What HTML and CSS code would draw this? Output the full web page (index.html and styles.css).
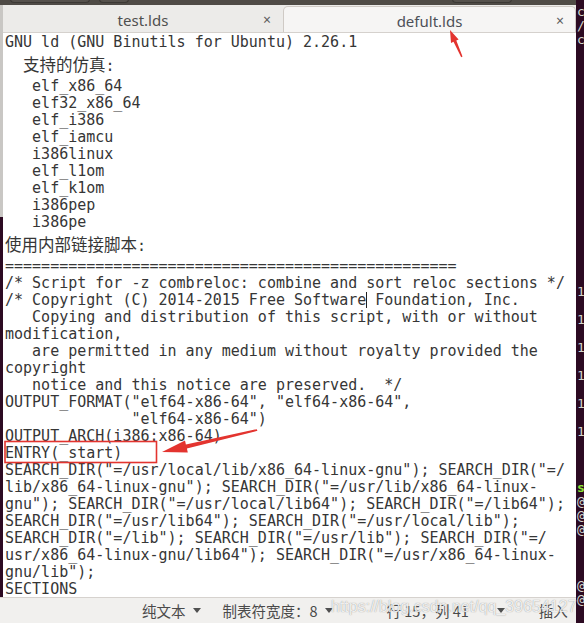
FILE: index.html
```html
<!DOCTYPE html>
<html>
<head>
<meta charset="utf-8">
<link rel="stylesheet" href="styles.css">
</head>
<body>
<div class="screen">
  <div class="main">
    <div class="topbar">
      <span class="tb-btn tb-a"></span>
      <span class="tb-btn tb-b"></span>
      <span class="tb-btn tb-c"></span>
    </div>
    <div class="mid">
      <div class="edge"><div class="edge-grey"></div><div class="edge-purple"></div></div>
      <div class="editor">
        <div class="tabs">
          <div class="tab"><span class="tab-label">test.lds</span><span class="tab-close">×</span></div>
          <div class="tab active"><span class="tab-label">defult.lds</span><span class="tab-close">×</span></div>
        </div>
        <div class="doc">
<div class="ln">GNU ld (GNU Binutils for Ubuntu) 2.26.1</div>
<div class="ln cjk">  <span class="zh">支持的仿真</span>:</div>
<div class="ln">   elf_x86_64</div>
<div class="ln">   elf32_x86_64</div>
<div class="ln">   elf_i386</div>
<div class="ln">   elf_iamcu</div>
<div class="ln">   i386linux</div>
<div class="ln">   elf_l1om</div>
<div class="ln">   elf_k1om</div>
<div class="ln">   i386pep</div>
<div class="ln">   i386pe</div>
<div class="ln cjk"><span class="zh">使用内部链接脚本</span>:</div>
<div class="ln">==================================================</div>
<div class="ln">/* Script for -z combreloc: combine and sort reloc sections */</div>
<div class="ln">/* Copyright (C) 2014-2015 Free Software<span class="caret"></span> Foundation, Inc.</div>
<div class="ln">   Copying and distribution of this script, with or without</div>
<div class="ln">modification,</div>
<div class="ln">   are permitted in any medium without royalty provided the</div>
<div class="ln">copyright</div>
<div class="ln">   notice and this notice are preserved.  */</div>
<div class="ln">OUTPUT_FORMAT("elf64-x86-64", "elf64-x86-64",</div>
<div class="ln">              "elf64-x86-64")</div>
<div class="ln">OUTPUT_ARCH(i386:x86-64)</div>
<div class="ln">ENTRY(_start)</div>
<div class="ln">SEARCH_DIR("=/usr/local/lib/x86_64-linux-gnu"); SEARCH_DIR("=/</div>
<div class="ln">lib/x86_64-linux-gnu"); SEARCH_DIR("=/usr/lib/x86_64-linux-</div>
<div class="ln">gnu"); SEARCH_DIR("=/usr/local/lib64"); SEARCH_DIR("=/lib64");</div>
<div class="ln">SEARCH_DIR("=/usr/lib64"); SEARCH_DIR("=/usr/local/lib");</div>
<div class="ln">SEARCH_DIR("=/lib"); SEARCH_DIR("=/usr/lib"); SEARCH_DIR("=/</div>
<div class="ln">usr/x86_64-linux-gnu/lib64"); SEARCH_DIR("=/usr/x86_64-linux-</div>
<div class="ln">gnu/lib");</div>
<div class="ln">SECTIONS</div>
        </div>
      </div>
    </div>
    <div class="status">
      <span class="st st-lang">纯文本<i class="tri"></i></span>
      <span class="st st-tab">制表符宽度：8<i class="tri"></i></span>
      <span class="st st-pos">行 15，列 41</span>
      <span class="st st-dd"><i class="tri"></i></span>
      <span class="st st-ins">插入</span>
    </div>
  </div>
  <div class="term">
<pre class="term-text">c
/
c

















1

1

1

1

1

1



<b>s</b>
@
@
@



@
@</pre>
  </div>
</div>
<div class="watermark">https://blog.csdn.net/qq_39654127</div>
<svg class="annot" width="584" height="623" viewBox="0 0 584 623">
  <rect x="5" y="441.5" width="151.5" height="21" fill="none" stroke="#e3342f" stroke-width="1.6"/>
  <polygon fill="#e3342f" points="162,452 187.8,452.6 186.9,448.6 257.4,430.8 256.8,429.2 185.9,444.4 185,440.4"/>
  <polygon fill="#e3342f" points="450,30 458.6,39.6 456.3,40.6 462.5,56.6 461.2,57.2 453.5,41.8 451,43"/>
</svg>
</body>
</html>
```

FILE: styles.css
```css
html, body {
  margin: 0;
  padding: 0;
}
body {
  width: 584px;
  height: 623px;
  overflow: hidden;
  position: relative;
  background: #2c0a22;
}
.screen {
  display: flex;
  height: 623px;
}
.main {
  width: 576px;
  display: flex;
  flex-direction: column;
}
.topbar {
  height: 5px;
  background: #4f4b46;
  display: flex;
  position: relative;
  overflow: hidden;
}
.tb-btn {
  display: block;
  height: 3px;
  margin-top: -1px;
  border: 1px solid #3c3935;
  border-top: none;
  border-radius: 0 0 5px 5px;
  background: #55514c;
}
.tb-a { width: 78px; margin-left: 10px; }
.tb-b { width: 28px; margin-left: 9px; }
.tb-c { width: 58px; margin-left: 323px; }
.mid {
  flex: 1;
  display: flex;
  min-height: 0;
}
.edge {
  width: 3px;
  display: flex;
  flex-direction: column;
}
.edge-grey {
  height: 212px;
  background: #c9c7c4;
}
.edge-purple {
  flex: 1;
  background: #2c0a22;
}
.editor {
  flex: 1;
  display: flex;
  flex-direction: column;
  background: #ffffff;
  min-width: 0;
}
.tabs {
  height: 28px;
  box-sizing: border-box;
  display: flex;
  background: #ecebe9;
  border-bottom: 1px solid #d5d1cd;
}
.tab {
  width: 280px;
  display: grid;
  grid-template-columns: 1fr auto 1fr;
  align-items: center;
  font-family: "Noto Sans", "DejaVu Sans", sans-serif;
  font-size: 15px;
  color: #4f4f4f;
  box-sizing: border-box;
}
.tab.active {
  flex: 1;
  margin-top: 1px;
  background: #f6f5f4;
  border: 1px solid #cfcac5;
  border-bottom: none;
  border-radius: 5px 5px 0 0;
  color: #4d5058;
}
.tab-label {
  grid-column: 2;
  line-height: 18px;
  padding-top: 3px;
}
.tab-close {
  grid-column: 3;
  justify-self: end;
  margin-right: 12px;
  padding-top: 2px;
  font-size: 14px;
  color: #5c5c5c;
}
.tab.active .tab-label {
  padding-top: 2px;
}
.tab.active .tab-close {
  margin-right: 11px;
  padding-top: 1px;
}
.doc {
  flex: 1;
  padding-left: 2px;
  padding-top: 1px;
  font-family: "DejaVu Sans Mono", "Liberation Mono", monospace;
  font-size: 15px;
  line-height: 17px;
  color: #363636;
  overflow: hidden;
}
.ln {
  white-space: pre;
  height: 17px;
}
.ln.cjk {
  height: 27px;
  line-height: 27px;
}
.zh {
  font-family: "Noto Sans CJK SC", sans-serif;
  font-size: 16.5px;
}
.caret {
  display: inline-block;
  width: 0;
  height: 16px;
  border-left: 1px solid #222;
  margin-right: -1px;
  vertical-align: -3px;
}
.status {
  height: 26px;
  box-sizing: border-box;
  border-top: 1px solid #d6d2ce;
  background: #f1f0ee;
  display: flex;
  align-items: center;
  font-family: "Noto Sans CJK SC", "Noto Sans", sans-serif;
  font-size: 14.5px;
  color: #4a4a4a;
}
.st {
  display: flex;
  align-items: center;
  white-space: pre;
}
.st-lang { margin-left: 142px; }
.st-tab { margin-left: 22px; }
.st-pos { margin-left: 54px; }
.st-dd { margin-left: 28px; }
.st-ins { margin-left: 34px; }
.tri {
  display: inline-block;
  width: 0;
  height: 0;
  border-left: 4.5px solid transparent;
  border-right: 4.5px solid transparent;
  border-top: 5px solid #505050;
  margin-left: 7px;
}
.st-dd .tri { margin-left: 0; }
.term {
  width: 8px;
  background: #2c0a22;
  overflow: hidden;
}
.term-text {
  margin: 0;
  padding-top: 5px;
  padding-left: 1px;
  font-family: "DejaVu Sans Mono", monospace;
  font-size: 13px;
  line-height: 14px;
  color: #d3d7cf;
}
.term-text b {
  color: #8ae234;
}
.watermark {
  position: absolute;
  left: 331px;
  top: 597px;
  font-family: "Liberation Sans", sans-serif;
  font-size: 16px;
  line-height: 19px;
  color: rgba(255, 255, 255, 0.85);
  text-shadow: 0 0 1px rgba(90, 90, 90, 0.7);
  white-space: nowrap;
  pointer-events: none;
}
.annot {
  position: absolute;
  left: 0;
  top: 0;
  pointer-events: none;
}
```
